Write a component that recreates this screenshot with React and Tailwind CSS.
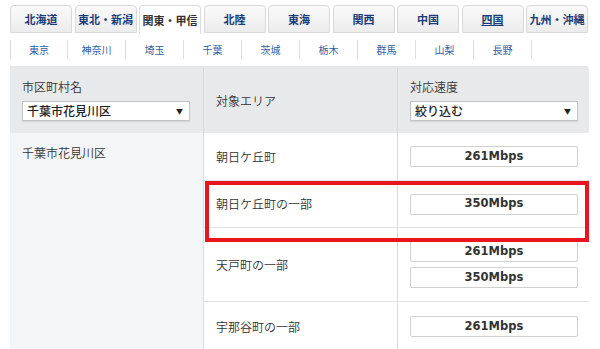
import React from "react";

const tabs = ["北海道", "東北・新潟", "関東・甲信", "北陸", "東海", "関西", "中国", "四国", "九州・沖縄"];
const prefs = ["東京", "神奈川", "埼玉", "千葉", "茨城", "栃木", "群馬", "山梨", "長野"];

function Speed({ v }) {
  return (
    <div className="w-[168px] h-[21px] border border-[#d0d0d0] rounded-[2px] bg-white flex items-center justify-center text-[11.5px] font-bold text-[#333] font-['DejaVu_Sans',sans-serif]">
      {v}
    </div>
  );
}

function Select({ text, w }) {
  return (
    <div className={`h-[20px] ${w} bg-white border border-[#c4c4c4] shadow-[0_1px_1px_rgba(0,0,0,0.08)] flex items-center justify-between pl-[4px] pr-[6px]`}>
      <span className="text-[12px] text-[#222] font-medium leading-none">{text}</span>
      <span className="text-[7px] text-[#222] leading-none">▼</span>
    </div>
  );
}

const rows = [
  { name: "朝日ケ丘町", speeds: ["261Mbps"], h: "h-[48px]" },
  { name: "朝日ケ丘町の一部", speeds: ["350Mbps"], h: "h-[47px]" },
  { name: "天戸町の一部", speeds: ["261Mbps", "350Mbps"], h: "h-[74px]" },
  { name: "宇那谷町の一部", speeds: ["261Mbps"], h: "h-[49px]" },
];

export default function App() {
  return (
    <div className="relative w-[600px] h-[349px] overflow-hidden bg-white text-[#333] font-['Noto_Sans_CJK_JP','Noto_Sans',sans-serif]">
      {/* Tabs */}
      <div className="pl-[10px] pt-[5px]">
        <div className="grid grid-cols-9 gap-x-[2.5px] w-[578px]">
          {tabs.map((t, i) => {
            const active = i === 2;
            return (
              <div
                key={t}
                className={
                  active
                    ? "h-[29px] rounded-t-[4px] border border-b-0 border-[#dcdcdc] bg-white flex items-center justify-center text-[11px] font-bold text-[#333] whitespace-nowrap"
                    : `h-[28px] rounded-t-[4px] border border-[#d8d8d8] bg-gradient-to-b from-[#fafafa] to-[#ececec] flex items-center justify-center text-[11px] font-bold text-[#1a3c78] whitespace-nowrap ${i === 7 ? "underline" : ""}`
                }
              >
                {t}
              </div>
            );
          })}
        </div>
      </div>
      {/* Sub nav */}
      <div className="ml-[10px] w-[578px] h-[35px] flex items-center border-b-2 border-[#e6e6e6] -mt-px">
        {prefs.map((p, i) => (
          <div
            key={p}
            className={`w-[58px] h-[19px] flex items-center justify-center text-[10px] text-[#2f5fa6] border-r border-[#dcdcdc] ${i === 0 ? "border-l" : ""}`}
          >
            {p}
          </div>
        ))}
      </div>
      {/* Table */}
      <div className="ml-[10px] w-[579px]">
        <div className="grid grid-cols-[193px_194px_192px] h-[65px] bg-[#e8e9eb]">
          <div className="pl-[12px] pt-[11px] flex flex-col gap-[6px]">
            <span className="text-[12px] leading-[16px] text-[#333] font-[350]">市区町村名</span>
            <Select text="千葉市花見川区" w="w-[168px]" />
          </div>
          <div className="border-l border-[#d8d8d8] pl-[12px] flex items-center">
            <span className="text-[12px] text-[#333] font-[350]">対象エリア</span>
          </div>
          <div className="border-l border-[#d8d8d8] pl-[12px] pt-[11px] flex flex-col gap-[6px]">
            <span className="text-[12px] leading-[16px] text-[#333] font-[350]">対応速度</span>
            <Select text="絞り込む" w="w-[168px]" />
          </div>
        </div>
        <div className="flex">
          <div className="w-[193px] bg-[#f4f5f7] pl-[12px] pt-[12px]">
            <span className="block text-[12px] leading-[16px] text-[#333] font-[350]">千葉市花見川区</span>
          </div>
          <div className="flex flex-col">
            {rows.map((r, i) => (
              <div key={i} className={`grid grid-cols-[194px_192px] ${r.h} ${i < rows.length - 1 ? "border-b border-[#e2e2e2]" : ""}`}>
                <div className="border-l border-[#dcdcdc] pl-[12px] flex items-center">
                  <span className="text-[12px] text-[#333] font-[350]">{r.name}</span>
                </div>
                <div className="border-l border-[#dcdcdc] pl-[12px] flex flex-col justify-center gap-[5px]">
                  {r.speeds.map((s, j) => (
                    <Speed key={j} v={s} />
                  ))}
                </div>
              </div>
            ))}
          </div>
        </div>
      </div>
      {/* Highlight */}
      <div className="absolute left-[205px] top-[181px] w-[384px] h-[61px] border-[4px] border-[#e8141e]" />
    </div>
  );
}
